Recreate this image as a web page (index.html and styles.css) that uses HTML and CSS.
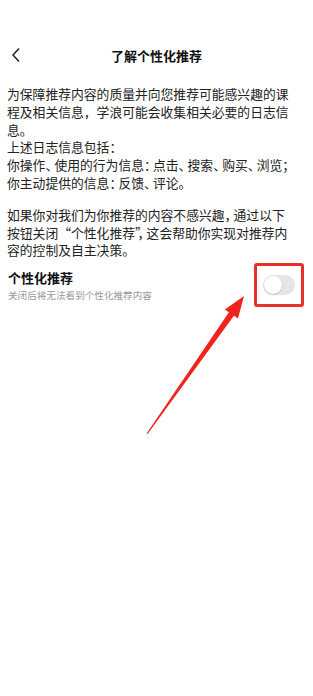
FILE: index.html
```html
<!DOCTYPE html>
<html lang="zh-CN">

<head>
  <meta charset="UTF-8" />
  <title>了解个性化推荐</title>
  <link rel="stylesheet" href="styles.css">
</head>

<body>
  <div class="page">
    <div class="topbar">
      <span class="back">
        <svg width="10" height="16" viewBox="0 0 10 16">
          <path d="M8 1.5 L2 8 L8 14.5" fill="none" stroke="#222" stroke-width="1.5" />
        </svg>
      </span>
      <h1 class="titulo">了解个性化推荐</h1>
    </div>

    <div class="contenido">
      <p class="parrafo">
        <span class="linea">为保障推荐内容的质量并向您推荐可能感兴趣的课</span>
        <span class="linea">程及相关信息，学浪可能会收集相关必要的日志信</span>
        <span class="linea">息。</span>
        <span class="linea">上述日志信息包括<span class="p">：</span></span>
        <span class="linea">你操作<span class="p">、</span>使用的行为信息<span class="p">：</span>点击<span class="p">、</span>搜索<span class="p">、</span>购买<span class="p">、</span>浏览<span class="p">；</span></span>
        <span class="linea">你主动提供的信息<span class="p">：</span>反馈<span class="p">、</span>评论。</span>
      </p>
      <p class="parrafo ultimo">
        <span class="linea">如果你对我们为你推荐的内容不感兴趣<span class="p">，</span>通过以下</span>
        <span class="linea">按钮关闭“个性化推荐<span class="p">”，</span>这会帮助你实现对推荐内</span>
        <span class="linea">容的控制及自主决策。</span>
      </p>

      <div class="opcion">
        <div class="opcion-texto">
          <div class="opcion-titulo">个性化推荐</div>
          <div class="opcion-desc">关闭后将无法看到个性化推荐内容</div>
        </div>
        <div class="marco">
          <div class="switch"><span class="knob"></span></div>
        </div>
      </div>
    </div>

    <!-- flecha de anotación -->
    <svg class="flecha" width="313" height="696" viewBox="0 0 313 696">
      <polygon points="244,296 238,318.6 233.9,315.7 147.6,434 146.6,433.4 228.9,312.3 224.8,309.4" fill="#f0241d" />
    </svg>
  </div>
</body>

</html>
```

FILE: styles.css
```css
* {
  box-sizing: border-box;
}

body {
  margin: 0;
  background-color: #fff;
  color: #222;
  font-family: "Noto Sans CJK SC", "Noto Sans", sans-serif;
}

.page {
  position: relative;
  width: 313px;
  height: 696px;
  overflow: hidden;
}

.topbar {
  position: relative;
  margin-top: 40px;
  height: 30px;
  display: flex;
  align-items: center;
  justify-content: center;
}

.back {
  position: absolute;
  left: 11px;
  top: 7px;
  display: flex;
}

.titulo {
  margin: 0;
  font-size: 13px;
  font-weight: bold;
  color: #111;
}

.contenido {
  padding: 15px 8px 0 7px;
}

.parrafo {
  margin: 0 0 14px 0;
  font-size: 12.8px;
  line-height: 17.8px;
  color: #222;
}

.parrafo.ultimo {
  margin-bottom: 4px;
}

.linea {
  display: block;
  white-space: nowrap;
}

/* puntuación más estrecha */
.p {
  letter-spacing: -3.8px;
}

.opcion {
  display: flex;
  justify-content: space-between;
  align-items: center;
}

.opcion-texto {
  padding-top: 3px;
  padding-left: 1px;
}

.opcion-titulo {
  font-size: 13px;
  font-weight: bold;
  line-height: 18px;
  color: #111;
}

.opcion-desc {
  font-size: 9.6px;
  line-height: 17px;
  color: #999;
}

.marco {
  width: 50px;
  height: 44px;
  margin-right: 1px;
  border: 3px solid #e8302a;
  border-radius: 3px;
  display: flex;
  align-items: center;
  justify-content: center;
}

.switch {
  width: 32px;
  height: 20px;
  border-radius: 10px;
  background-color: #e6e6e6;
  position: relative;
}

.knob {
  position: absolute;
  left: 1px;
  top: 1px;
  width: 18px;
  height: 18px;
  border-radius: 50%;
  background-color: #fff;
  box-shadow: 0 1px 2px rgba(0, 0, 0, 0.2);
}

.flecha {
  position: absolute;
  left: 0;
  top: 0;
  pointer-events: none;
}
```
